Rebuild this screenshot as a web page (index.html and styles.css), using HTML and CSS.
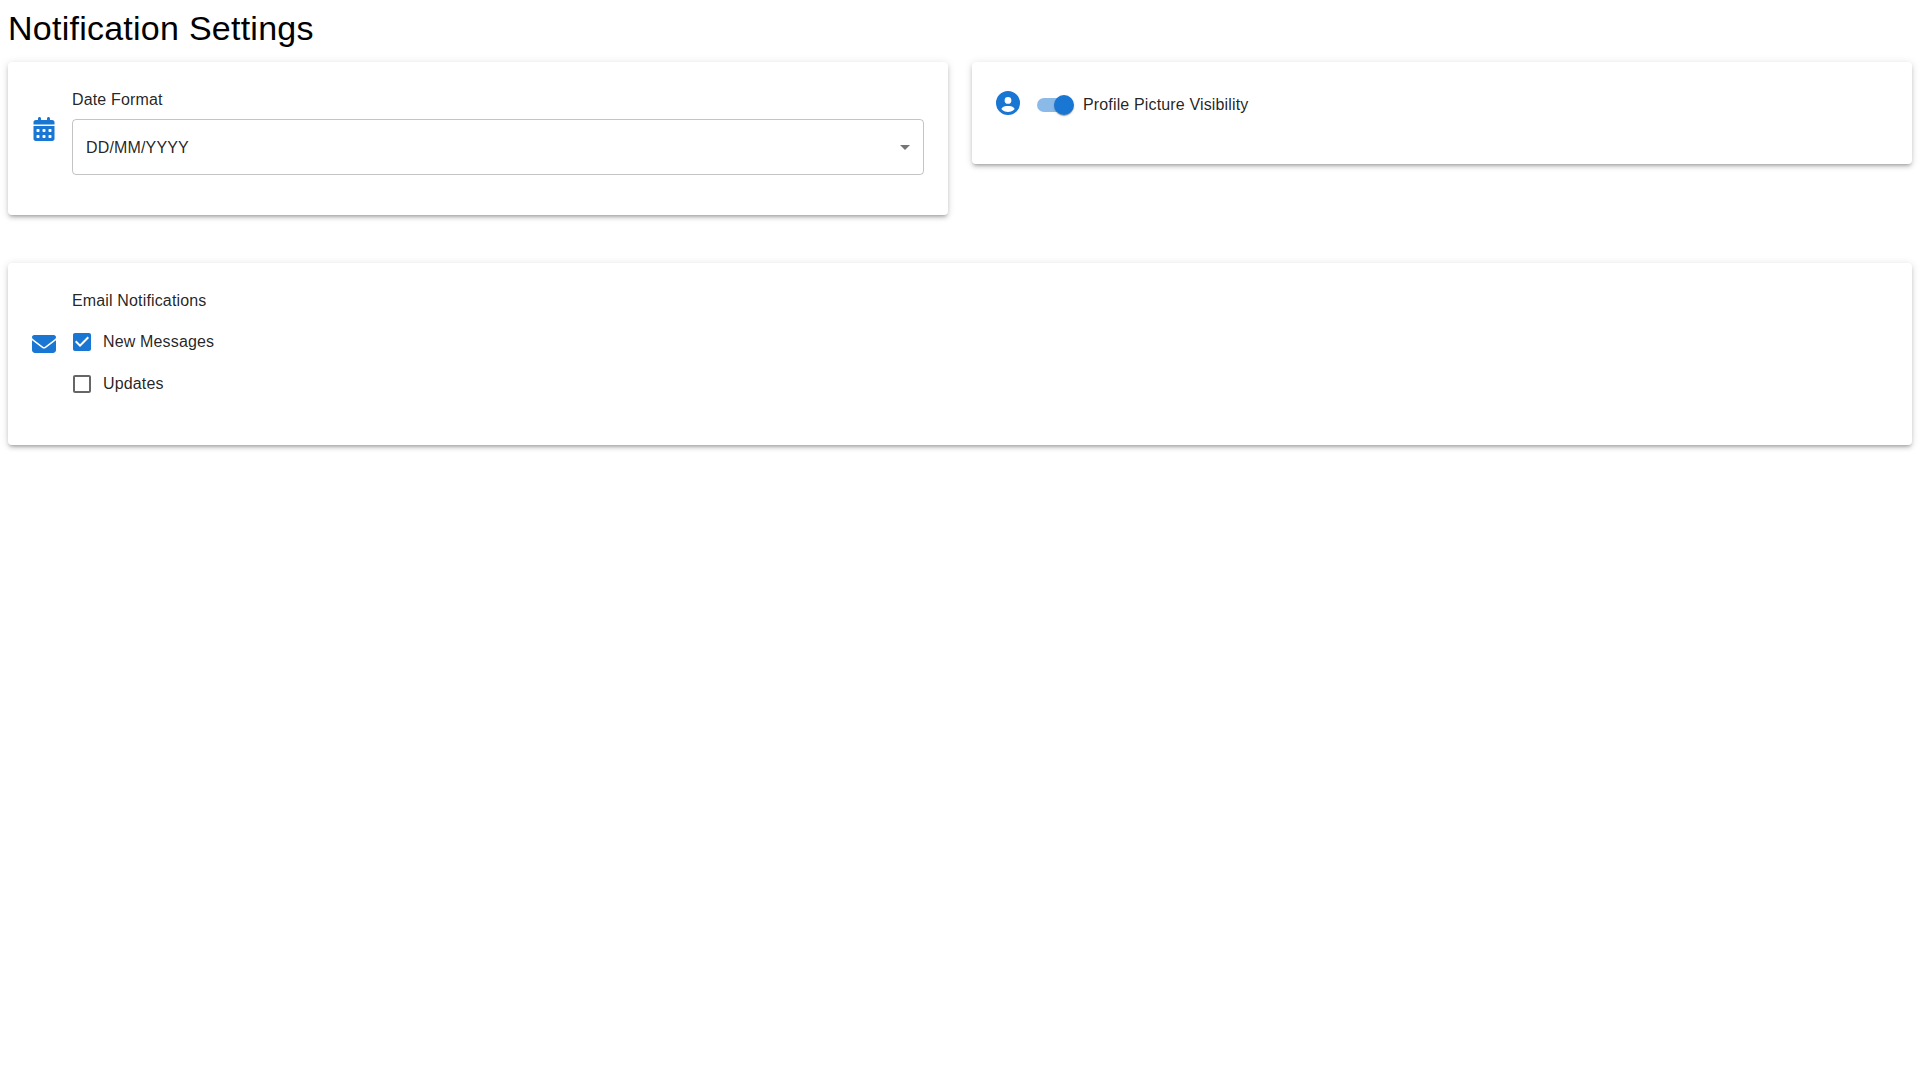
FILE: index.html
```html
<!DOCTYPE html>
<html lang="en">
<head>
<meta charset="utf-8">
<title>Notification Settings</title>
<link rel="stylesheet" href="styles.css">
</head>
<body>
<h1 class="title">Notification Settings</h1>
<div class="grid">
  <section class="card">
    <div class="icon-box">
      <svg class="icon" width="22" height="24" viewBox="0 0 448 512"><path d="M128 0c17.7 0 32 14.3 32 32V64H288V32c0-17.7 14.3-32 32-32s32 14.3 32 32V64h48c26.5 0 48 21.5 48 48v48H0V112C0 85.5 21.5 64 48 64H96V32c0-17.7 14.3-32 32-32zM0 192H448V464c0 26.5-21.5 48-48 48H48c-26.5 0-48-21.5-48-48V192zm64 80v32c0 8.8 7.2 16 16 16h32c8.8 0 16-7.2 16-16V272c0-8.8-7.2-16-16-16H80c-8.8 0-16 7.2-16 16zm128 0v32c0 8.8 7.2 16 16 16h32c8.8 0 16-7.2 16-16V272c0-8.8-7.2-16-16-16H208c-8.8 0-16 7.2-16 16zm144-16c-8.8 0-16 7.2-16 16v32c0 8.8 7.2 16 16 16h32c8.8 0 16-7.2 16-16V272c0-8.8-7.2-16-16-16H336zM64 400v32c0 8.8 7.2 16 16 16h32c8.8 0 16-7.2 16-16V400c0-8.8-7.2-16-16-16H80c-8.8 0-16 7.2-16 16zm144-16c-8.8 0-16 7.2-16 16v32c0 8.8 7.2 16 16 16h32c8.8 0 16-7.2 16-16V400c0-8.8-7.2-16-16-16H208zm112 16v32c0 8.8 7.2 16 16 16h32c8.8 0 16-7.2 16-16V400c0-8.8-7.2-16-16-16H336c-8.8 0-16 7.2-16 16z"/></svg>
    </div>
    <div class="content">
      <div class="label date-label">Date Format</div>
      <div class="select">
        <span class="select-value">DD/MM/YYYY</span>
        <svg class="arrow" width="24" height="24" viewBox="0 0 24 24"><path d="M7 10l5 5 5-5z"/></svg>
      </div>
    </div>
  </section>
  <section class="card">
    <div class="icon-box">
      <svg class="icon" width="24" height="24" viewBox="0 0 512 512"><path d="M399 384.2C376.9 345.8 335.4 320 288 320H224c-47.4 0-88.9 25.8-111 64.2c35.2 39.2 86.2 63.8 143 63.8s107.8-24.7 143-63.8zM0 256a256 256 0 1 1 512 0A256 256 0 1 1 0 256zm256 16a72 72 0 1 0 0-144 72 72 0 1 0 0 144z"/></svg>
    </div>
    <div class="content">
      <div class="switch-row">
        <div class="switch"><span class="track"></span><span class="thumb"></span></div>
        <span class="label">Profile Picture Visibility</span>
      </div>
    </div>
  </section>
  <section class="card wide">
    <div class="icon-box">
      <svg class="icon" width="24" height="24" viewBox="0 0 512 512"><path d="M48 64C21.5 64 0 85.5 0 112c0 15.1 7.1 29.3 19.2 38.4L236.8 313.6c11.4 8.5 27 8.5 38.4 0L492.8 150.4c12.1-9.1 19.2-23.3 19.2-38.4c0-26.5-21.5-48-48-48H48zM0 176V384c0 35.3 28.7 64 64 64H448c35.3 0 64-28.7 64-64V176L294.4 339.2c-22.8 17.1-54 17.1-76.8 0L0 176z"/></svg>
    </div>
    <div class="content">
      <div class="label email-label">Email Notifications</div>
      <label class="check-row">
        <svg class="check on" width="24" height="24" viewBox="0 0 24 24"><path d="M19 3H5c-1.11 0-2 .9-2 2v14c0 1.1.89 2 2 2h14c1.11 0 2-.9 2-2V5c0-1.1-.89-2-2-2zm-9 14l-5-5 1.41-1.41L10 14.17l7.59-7.59L19 8l-9 9z"/></svg>
        <span class="label">New Messages</span>
      </label>
      <label class="check-row">
        <svg class="check off" width="24" height="24" viewBox="0 0 24 24"><path d="M19 5v14H5V5h14m0-2H5c-1.1 0-2 .9-2 2v14c0 1.1.9 2 2 2h14c1.1 0 2-.9 2-2V5c0-1.1-.9-2-2-2z"/></svg>
        <span class="label">Updates</span>
      </label>
    </div>
  </section>
</div>
</body>
</html>
```
FILE: styles.css
```css
* { box-sizing: border-box; }
body {
  margin: 0;
  padding: 8px;
  background: #fff;
  font-family: "Liberation Sans", Arial, sans-serif;
  color: rgba(0, 0, 0, 0.87);
}
.title {
  margin: 0 0 14px;
  font-size: 34px;
  font-weight: 400;
  line-height: 40px;
  letter-spacing: 0.25px;
  color: #000;
}
.grid {
  display: grid;
  grid-template-columns: 1fr 1fr;
  gap: 48px 24px;
  align-items: start;
}
.card {
  display: flex;
  align-items: center;
  padding: 24px;
  background: #fff;
  border-radius: 4px;
  box-shadow: 0 3px 3px -2px rgba(0,0,0,.2), 0 3px 4px 0 rgba(0,0,0,.14), 0 1px 8px 0 rgba(0,0,0,.12);
}
.wide { grid-column: 1 / -1; }
.icon-box {
  flex: none;
  display: flex;
  justify-content: center;
  width: 24px;
  height: 24px;
  margin: 0 16px 20px 0;
}
.icon { fill: #1976d2; display: block; }
.content { flex: 1; min-width: 0; padding-bottom: 16px; }
.label {
  font-size: 16px;
  line-height: 24px;
  letter-spacing: 0.15px;
}
.date-label { padding-top: 2px; margin-bottom: 7px; }
.email-label { padding-top: 2px; margin-bottom: 8px; }
.select {
  display: flex;
  align-items: center;
  justify-content: space-between;
  height: 56px;
  padding: 0 6px 0 13px;
  border: 1px solid rgba(0, 0, 0, 0.23);
  border-radius: 4px;
  font-size: 16px;
  letter-spacing: 0.15px;
}
.select-value { padding-top: 2px; }
.arrow { fill: rgba(0, 0, 0, 0.54); }
.switch-row { display: flex; align-items: center; height: 38px; margin-left: -3px; }
.switch { position: relative; flex: none; width: 50px; height: 38px; }
.track {
  position: absolute;
  left: 4px;
  top: 12px;
  width: 34px;
  height: 14px;
  border-radius: 7px;
  background: #1976d2;
  opacity: 0.5;
}
.thumb {
  position: absolute;
  left: 21px;
  top: 9px;
  width: 20px;
  height: 20px;
  border-radius: 50%;
  background: #1976d2;
  box-shadow: 0 2px 1px -1px rgba(0,0,0,.2), 0 1px 1px 0 rgba(0,0,0,.14), 0 1px 3px 0 rgba(0,0,0,.12);
}
.check-row { display: flex; align-items: center; height: 42px; }
.check { flex: none; margin-right: 9px; margin-left: -2px; }
.check.on { fill: #1976d2; }
.check.off { fill: rgba(0, 0, 0, 0.6); }
```
